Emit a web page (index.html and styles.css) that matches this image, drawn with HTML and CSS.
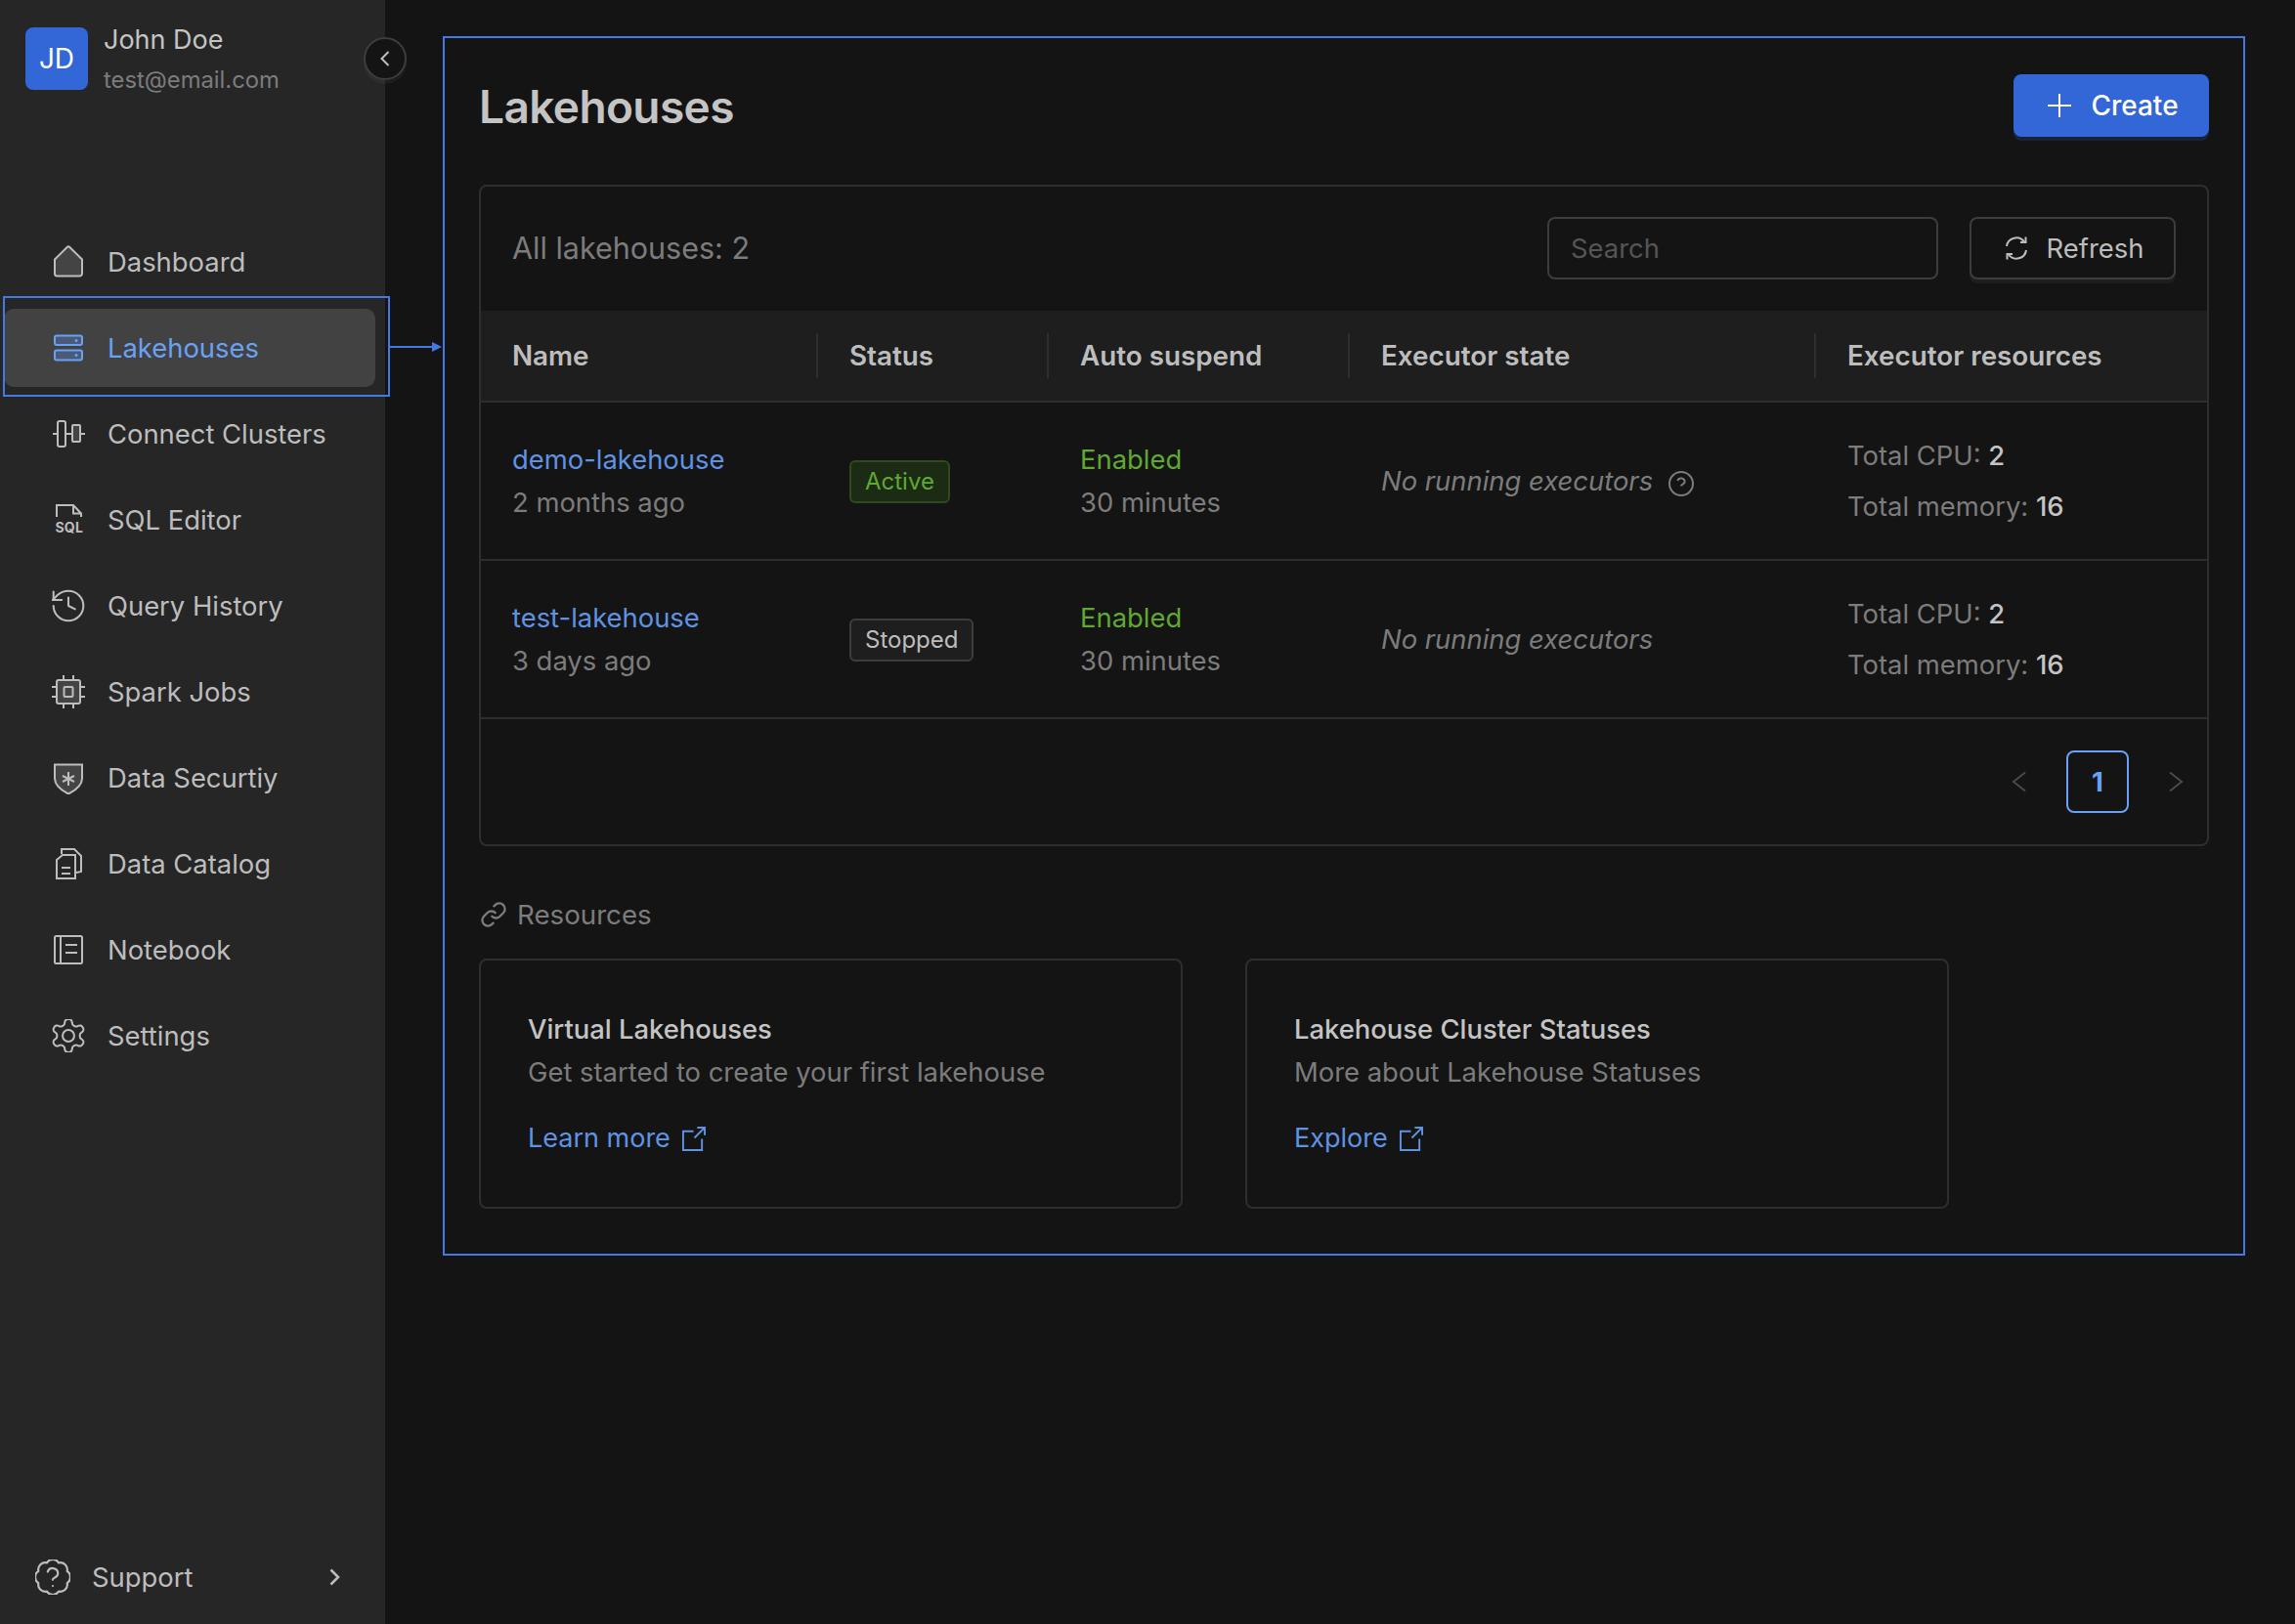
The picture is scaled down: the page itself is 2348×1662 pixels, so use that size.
FILE: index.html
```html
<!DOCTYPE html>
<html lang="en">
  <head>
    <meta charset="UTF-8" />
    <meta name="viewport" content="width=device-width, initial-scale=1.0" />
    <title>Lakehouses</title>
    <link rel="stylesheet" href="styles.css">
  </head>
  <body>
    <aside class="sidebar">
      <div class="user">
        <div class="avatar">JD</div>
        <div>
          <div class="user-name">John Doe</div>
          <div class="user-email">test@email.com</div>
        </div>
        <button class="collapse">
          <svg width="14" height="18" viewBox="0 0 14 18"><path d="M10.5 2 3.5 9l7 7" /></svg>
        </button>
      </div>

      <nav class="nav">
        <a class="nav-item">
          <svg class="nav-icon" viewBox="0 0 34 34"><path class="soft" d="M3 14.500 15.600 2a2 2 0 0 1 2.800 0L31 14.500V29a2.500 2.500 0 0 1-2.500 2.500h-23A2.500 2.500 0 0 1 3 29Z" /></svg>
          Dashboard
        </a>
        <a class="nav-item active">
          <svg class="nav-icon" viewBox="0 0 34 34">
            <rect class="soft" x="3" y="4.500" width="28" height="9.500" rx="2" />
            <rect class="soft" x="3" y="19.500" width="28" height="10" rx="2" />
            <circle class="dot" cx="25" cy="9.500" r="1.500" />
            <circle class="dot" cx="25" cy="24.500" r="1.500" />
          </svg>
          Lakehouses
          <span class="mark-box"></span>
          <svg class="mark-arrow" width="54" height="14" viewBox="0 0 54 14"><path d="M0 7h44" /><path class="head" d="M43 2l10 5-10 5z" /></svg>
        </a>
        <a class="nav-item">
          <svg class="nav-icon" viewBox="0 0 34 34">
            <rect x="6" y="4" width="8" height="26" rx="2" />
            <rect class="soft" x="21" y="8" width="8" height="17" rx="1" />
            <path d="M1 17h5M14 17h7M29 17h5" />
          </svg>
          Connect Clusters
        </a>
        <a class="nav-item">
          <svg class="nav-icon" viewBox="0 0 34 34">
            <path d="M5 14V2h17l8 8.500V14M22 2v8.500h8" />
            <text class="icon-text" x="3.500" y="30">SQL</text>
          </svg>
          SQL Editor
        </a>
        <a class="nav-item">
          <svg class="nav-icon lucide" viewBox="2 2 20 20">
            <path d="M3 12a9 9 0 1 0 9-9 9.750 9.750 0 0 0-6.740 2.740L2.500 8.500" />
            <path d="M3 3.500v5h5M12 7v5l4 2" />
          </svg>
          Query History
        </a>
        <a class="nav-item">
          <svg class="nav-icon" viewBox="0 0 34 34">
            <rect class="soft" x="5" y="5" width="24" height="24" rx="2" />
            <rect x="12.500" y="12" width="9" height="10" rx="1" />
            <path d="M12 0v5M22 0v5M12 29v5M22 29v5M0 12h5M0 22h5M29 12h5M29 22h5" />
          </svg>
          Spark Jobs
        </a>
        <a class="nav-item">
          <svg class="nav-icon" viewBox="0 0 34 34">
            <path class="soft" d="M3 3.500h28v14c0 7-6 12-14 16C9 29.500 3 24.500 3 17.500Z" />
            <path d="M17 11v14M11 15l12 6M23 15l-12 6" />
          </svg>
          Data Securtiy
        </a>
        <a class="nav-item">
          <svg class="nav-icon" viewBox="0 0 34 34">
            <path d="M10 7V2h13l7 7v16l-5 1" />
            <path d="M5 13l6-5h13v24H5ZM10 21h9M10 27h9" />
          </svg>
          Data Catalog
        </a>
        <a class="nav-item">
          <svg class="nav-icon" viewBox="0 0 34 34">
            <rect x="3" y="3" width="28" height="28" rx="1.500" />
            <path d="M9 3v28M14 12h12M14 20h12" />
          </svg>
          Notebook
        </a>
        <a class="nav-item">
          <svg class="nav-icon lucide" viewBox="2 2 20 20">
            <path d="M12.220 2h-.440a2 2 0 0 0-2 2v.180a2 2 0 0 1-1 1.730l-.430.250a2 2 0 0 1-2 0l-.150-.080a2 2 0 0 0-2.730.730l-.220.380a2 2 0 0 0 .730 2.730l.150.100a2 2 0 0 1 1 1.720v.510a2 2 0 0 1-1 1.740l-.150.090a2 2 0 0 0-.730 2.730l.220.380a2 2 0 0 0 2.730.730l.150-.080a2 2 0 0 1 2 0l.430.250a2 2 0 0 1 1 1.730V20a2 2 0 0 0 2 2h.440a2 2 0 0 0 2-2v-.180a2 2 0 0 1 1-1.730l.430-.250a2 2 0 0 1 2 0l.150.080a2 2 0 0 0 2.730-.730l.220-.390a2 2 0 0 0-.730-2.730l-.150-.080a2 2 0 0 1-1-1.740v-.500a2 2 0 0 1 1-1.740l.150-.090a2 2 0 0 0 .730-2.730l-.220-.380a2 2 0 0 0-2.730-.730l-.150.080a2 2 0 0 1-2 0l-.430-.250a2 2 0 0 1-1-1.730V4a2 2 0 0 0-2-2z" />
            <circle cx="12" cy="12" r="3.500" />
          </svg>
          Settings
        </a>
      </nav>

      <div class="support">
        <svg class="support-icon lucide" viewBox="2 2 20 20">
          <path d="M3.850 8.620a4 4 0 0 1 4.780-4.770 4 4 0 0 1 6.740 0 4 4 0 0 1 4.780 4.780 4 4 0 0 1 0 6.740 4 4 0 0 1-4.770 4.780 4 4 0 0 1-6.750 0 4 4 0 0 1-4.780-4.770 4 4 0 0 1 0-6.760Z" />
          <path d="M9.090 9a3 3 0 0 1 5.830 1c0 2-3 2.500-3 3.500M12 17h.010" />
        </svg>
        <span class="support-label">Support</span>
        <svg class="support-arrow" width="12" height="18" viewBox="0 0 12 18"><path d="M1.500 1.500 9 9l-7.500 7.500" /></svg>
      </div>
    </aside>

    <main class="main">
      <section class="panel">
        <div class="page-head">
          <h1>Lakehouses</h1>
          <button class="btn-create">
            <svg width="28" height="28" viewBox="0 0 28 28"><path d="M14 2v24M2 14h24" /></svg>
            Create
          </button>
        </div>

        <div class="card">
          <div class="toolbar">
            <div class="count">All lakehouses: 2</div>
            <div class="search">Search</div>
            <button class="btn-refresh">
              <svg width="26" height="26" viewBox="0 0 26 26">
                <path d="M3 11a10 10 0 0 1 18-4.500M23 15a10 10 0 0 1-18 4.500" />
                <path d="M22.500 1.500v5.500h-5.500M3.500 24.500V19H9" />
              </svg>
              Refresh
            </button>
          </div>

          <table class="table">
            <colgroup>
              <col class="col-name" />
              <col class="col-status" />
              <col class="col-suspend" />
              <col class="col-state" />
              <col />
            </colgroup>
            <thead>
              <tr>
                <th><div class="th-first">Name</div></th>
                <th><div class="th-cell">Status</div></th>
                <th><div class="th-cell">Auto suspend</div></th>
                <th><div class="th-cell">Executor state</div></th>
                <th><div class="th-cell">Executor resources</div></th>
              </tr>
            </thead>
            <tbody>
              <tr>
                <td class="td-first"><a class="link">demo-lakehouse</a><div class="muted">2 months ago</div></td>
                <td><span class="badge badge-active">Active</span></td>
                <td><div class="green">Enabled</div><div class="muted">30 minutes</div></td>
                <td>
                  <span class="no-exec">No running executors</span>
                  <svg class="help" width="26" height="26" viewBox="0 0 26 26">
                    <circle cx="13" cy="13" r="12" />
                    <path d="M9.300 10a3.800 3.800 0 0 1 7.400 1c0 2.200-3.700 2.500-3.700 4.500M13 19.500h.010" />
                  </svg>
                </td>
                <td><div class="res">Total CPU: <b>2</b></div><div class="res">Total memory: <b>16</b></div></td>
              </tr>
              <tr>
                <td class="td-first"><a class="link">test-lakehouse</a><div class="muted">3 days ago</div></td>
                <td><span class="badge">Stopped</span></td>
                <td><div class="green">Enabled</div><div class="muted">30 minutes</div></td>
                <td><span class="no-exec">No running executors</span></td>
                <td><div class="res">Total CPU: <b>2</b></div><div class="res">Total memory: <b>16</b></div></td>
              </tr>
            </tbody>
          </table>

          <div class="pager">
            <svg width="16" height="22" viewBox="0 0 16 22"><path d="M14 1.500 2 11l12 9.500" /></svg>
            <span class="page-num">1</span>
            <svg width="16" height="22" viewBox="0 0 16 22"><path d="M2 1.500 14 11 2 20.500" /></svg>
          </div>
        </div>

        <div class="res-title">
          <svg width="28" height="28" viewBox="0 0 24 24">
            <path d="M10 13a5 5 0 0 0 7.540.540l3-3a5 5 0 0 0-7.070-7.070l-1.720 1.710" />
            <path d="M14 11a5 5 0 0 0-7.540-.540l-3 3a5 5 0 0 0 7.070 7.070l1.710-1.710" />
          </svg>
          Resources
        </div>

        <div class="res-cards">
          <div class="res-card">
            <div class="res-card-title">Virtual Lakehouses</div>
            <div class="res-card-text">Get started to create your first lakehouse</div>
            <a class="res-link">Learn more
              <svg width="25" height="25" viewBox="0 0 26 26"><path d="M13 5H2v20h20V13M14 12 24.500 1.500M17 1h8v8" /></svg>
            </a>
          </div>
          <div class="res-card">
            <div class="res-card-title">Lakehouse Cluster Statuses</div>
            <div class="res-card-text">More about Lakehouse Statuses</div>
            <a class="res-link">Explore
              <svg width="25" height="25" viewBox="0 0 26 26"><path d="M13 5H2v20h20V13M14 12 24.500 1.500M17 1h8v8" /></svg>
            </a>
          </div>
        </div>
      </section>
    </main>
  </body>
</html>
```

FILE: styles.css
```css
* {
  box-sizing: border-box;
}
body {
  margin: 0;
  width: 2348px;
  height: 1662px;
  display: flex;
  overflow: hidden;
  background-color: #141414;
  color: #bdbdbd;
  font-family: Inter, "Noto Sans", sans-serif;
  font-size: 27.4px;
}
svg {
  fill: none;
  stroke: currentColor;
  stroke-width: 2;
  flex-shrink: 0;
}

/* sidebar */
.sidebar {
  width: 394px;
  flex-shrink: 0;
  display: flex;
  flex-direction: column;
  background-color: #262626;
}
.user {
  position: relative;
  display: flex;
  gap: 16px;
  height: 228px;
  padding: 24px 0 0 26px;
}
.avatar {
  width: 64px;
  height: 64px;
  margin-top: 4px;
  display: flex;
  align-items: center;
  justify-content: center;
  border-radius: 8px;
  background-color: #3366d6;
  color: #fff;
  font-size: 28px;
}
.user-name {
  font-size: 27px;
  line-height: 34px;
  color: #c4c4c4;
}
.user-email {
  margin-top: 7px;
  font-size: 23.800px;
  line-height: 34px;
  color: #7c7c7c;
}
.collapse {
  position: absolute;
  left: 372px;
  top: 38px;
  width: 44px;
  height: 44px;
  display: flex;
  align-items: center;
  justify-content: center;
  padding: 0;
  border: 2px solid #3d3d3d;
  border-radius: 50%;
  background-color: #141414;
  color: #bdbdbd;
  box-shadow: 0 4px 0 rgba(255, 255, 255, 0.04);
}
.nav {
  display: flex;
  flex-direction: column;
  gap: 8px;
  flex: 1;
}
.nav-item {
  position: relative;
  height: 80px;
  margin: 0 10px 0 4px;
  padding-left: 49px;
  display: flex;
  align-items: center;
  gap: 23px;
  border-radius: 10px;
}
.nav-item.active {
  background-color: #424242;
  color: #6aa1f5;
}
.nav-icon {
  width: 34px;
  height: 34px;
}
.nav-icon .soft {
  fill: #444;
}
.active .nav-icon .soft {
  fill: #4b5a78;
}
.lucide {
  stroke-width: 1.200;
  stroke-linecap: round;
  stroke-linejoin: round;
}
.dot {
  fill: currentColor;
  stroke: none;
}
.icon-text {
  fill: currentColor;
  stroke: none;
  font-size: 14px;
  font-weight: 700;
  letter-spacing: 0.200px;
}
.mark-box {
  position: absolute;
  left: -1px;
  top: -13px;
  width: 396px;
  height: 103px;
  border: 2px solid #4479e4;
}
.mark-arrow {
  position: absolute;
  left: 395px;
  top: 32px;
  color: #4479e4;
}
.mark-arrow .head {
  fill: #4479e4;
  stroke: none;
}
.support {
  height: 96px;
  padding: 0 45px 0 36px;
  display: flex;
  align-items: center;
}
.support-icon {
  width: 36px;
  height: 36px;
}
.support-label {
  margin-left: 22px;
  flex: 1;
}
.support-arrow {
  stroke-width: 2.500;
}

/* main area */
.main {
  flex: 1;
  padding: 37px 51px 0 59px;
}
.panel {
  height: 1248px;
  padding: 37px 35px 0;
  border: 2px solid #4479e4;
}
.page-head {
  display: flex;
  align-items: center;
  justify-content: space-between;
  margin-bottom: 49px;
}
h1 {
  margin: 0;
  padding-top: 2px;
  font-size: 46px;
  font-weight: 600;
  color: #c4c4c4;
  letter-spacing: -0.600px;
}
.btn-create {
  width: 200px;
  height: 64px;
  padding: 0 0 0 2px;
  display: flex;
  align-items: center;
  justify-content: center;
  gap: 18px;
  border: none;
  border-radius: 8px;
  background-color: #3366d6;
  color: #fff;
  font-family: inherit;
  font-size: 28px;
  font-weight: 500;
  box-shadow: 0 4px 0 #1a2238;
}
.card {
  height: 677px;
  border: 2px solid #2e2e2e;
  border-radius: 8px;
}
.toolbar {
  height: 127px;
  padding: 0 32px 2px 33px;
  display: flex;
  align-items: center;
  gap: 32px;
}
.count {
  flex: 1;
  margin-left: -1px;
  font-size: 30.500px;
  color: #7c7c7c;
}
.search {
  width: 400px;
  height: 64px;
  padding-left: 22px;
  display: flex;
  align-items: center;
  border: 2px solid #3d3d3d;
  border-radius: 8px;
  color: #555;
}
.btn-refresh {
  width: 211px;
  height: 64px;
  padding: 0 0 0 2px;
  display: flex;
  align-items: center;
  justify-content: center;
  gap: 18px;
  border: 2px solid #3d3d3d;
  border-radius: 8px;
  background-color: #141414;
  color: #bdbdbd;
  font-family: inherit;
  font-size: 27.400px;
  box-shadow: 0 4px 0 #1e1e1e;
}
.table {
  width: 100%;
  border-collapse: collapse;
  table-layout: fixed;
}
.col-name {
  width: 343px;
}
.col-status {
  width: 236px;
}
.col-suspend {
  width: 308px;
}
.col-state {
  width: 477px;
}
thead tr {
  height: 93px;
  background-color: #1e1e1e;
  border-bottom: 2px solid #2e2e2e;
}
th {
  padding: 0;
  text-align: left;
  font-weight: 600;
  font-size: 27.800px;
  color: #bdbdbd;
}
.th-first {
  padding-left: 32px;
}
.th-cell {
  height: 46px;
  padding-left: 32px;
  display: flex;
  align-items: center;
  border-left: 2px solid #2e2e2e;
}
tbody tr {
  height: 162px;
  border-bottom: 2px solid #2e2e2e;
}
td {
  padding: 0 0 0 34px;
  line-height: 44px;
}
td.td-first {
  padding-left: 32px;
}
.link {
  color: #5f93e2;
}
.muted {
  color: #7c7c7c;
}
.green {
  color: #5fa833;
}
.badge {
  display: inline-block;
  padding: 0 14px;
  height: 44px;
  line-height: 40px;
  font-size: 24px;
  border: 2px solid #3d3d3d;
  border-radius: 6px;
  background-color: #1e1e1e;
}
.badge-active {
  border-color: #2f4a1f;
  background-color: #1c2b14;
  color: #5fa833;
}
.no-exec {
  font-style: italic;
  color: #7c7c7c;
}
.help {
  margin-left: 8px;
  vertical-align: -6px;
  color: #7c7c7c;
}
.res {
  line-height: 52px;
  color: #7c7c7c;
}
.res b {
  font-weight: 500;
  color: #c4c4c4;
}
.pager {
  height: 127px;
  padding-right: 24px;
  display: flex;
  align-items: center;
  justify-content: flex-end;
  gap: 40px;
  color: #4a4a4a;
}
.page-num {
  width: 64px;
  height: 64px;
  display: flex;
  align-items: center;
  justify-content: center;
  border: 2px solid #6aa1f5;
  border-radius: 8px;
  color: #6aa1f5;
  font-weight: 700;
}
.res-title {
  margin-top: 53px;
  margin-left: 1px;
  display: flex;
  align-items: center;
  gap: 10px;
  font-size: 27.700px;
  color: #7c7c7c;
}
.res-cards {
  margin-top: 28px;
  display: flex;
  gap: 64px;
}
.res-card {
  width: 720px;
  height: 256px;
  padding: 48px 48px 0;
  border: 2px solid #2e2e2e;
  border-radius: 8px;
}
.res-card-title {
  line-height: 44px;
  font-weight: 500;
  color: #c4c4c4;
}
.res-card-text {
  line-height: 44px;
  color: #7c7c7c;
}
.res-link {
  margin-top: 24px;
  display: flex;
  align-items: center;
  gap: 11px;
  font-size: 27px;
  line-height: 44px;
  color: #5f93e2;
}
```
